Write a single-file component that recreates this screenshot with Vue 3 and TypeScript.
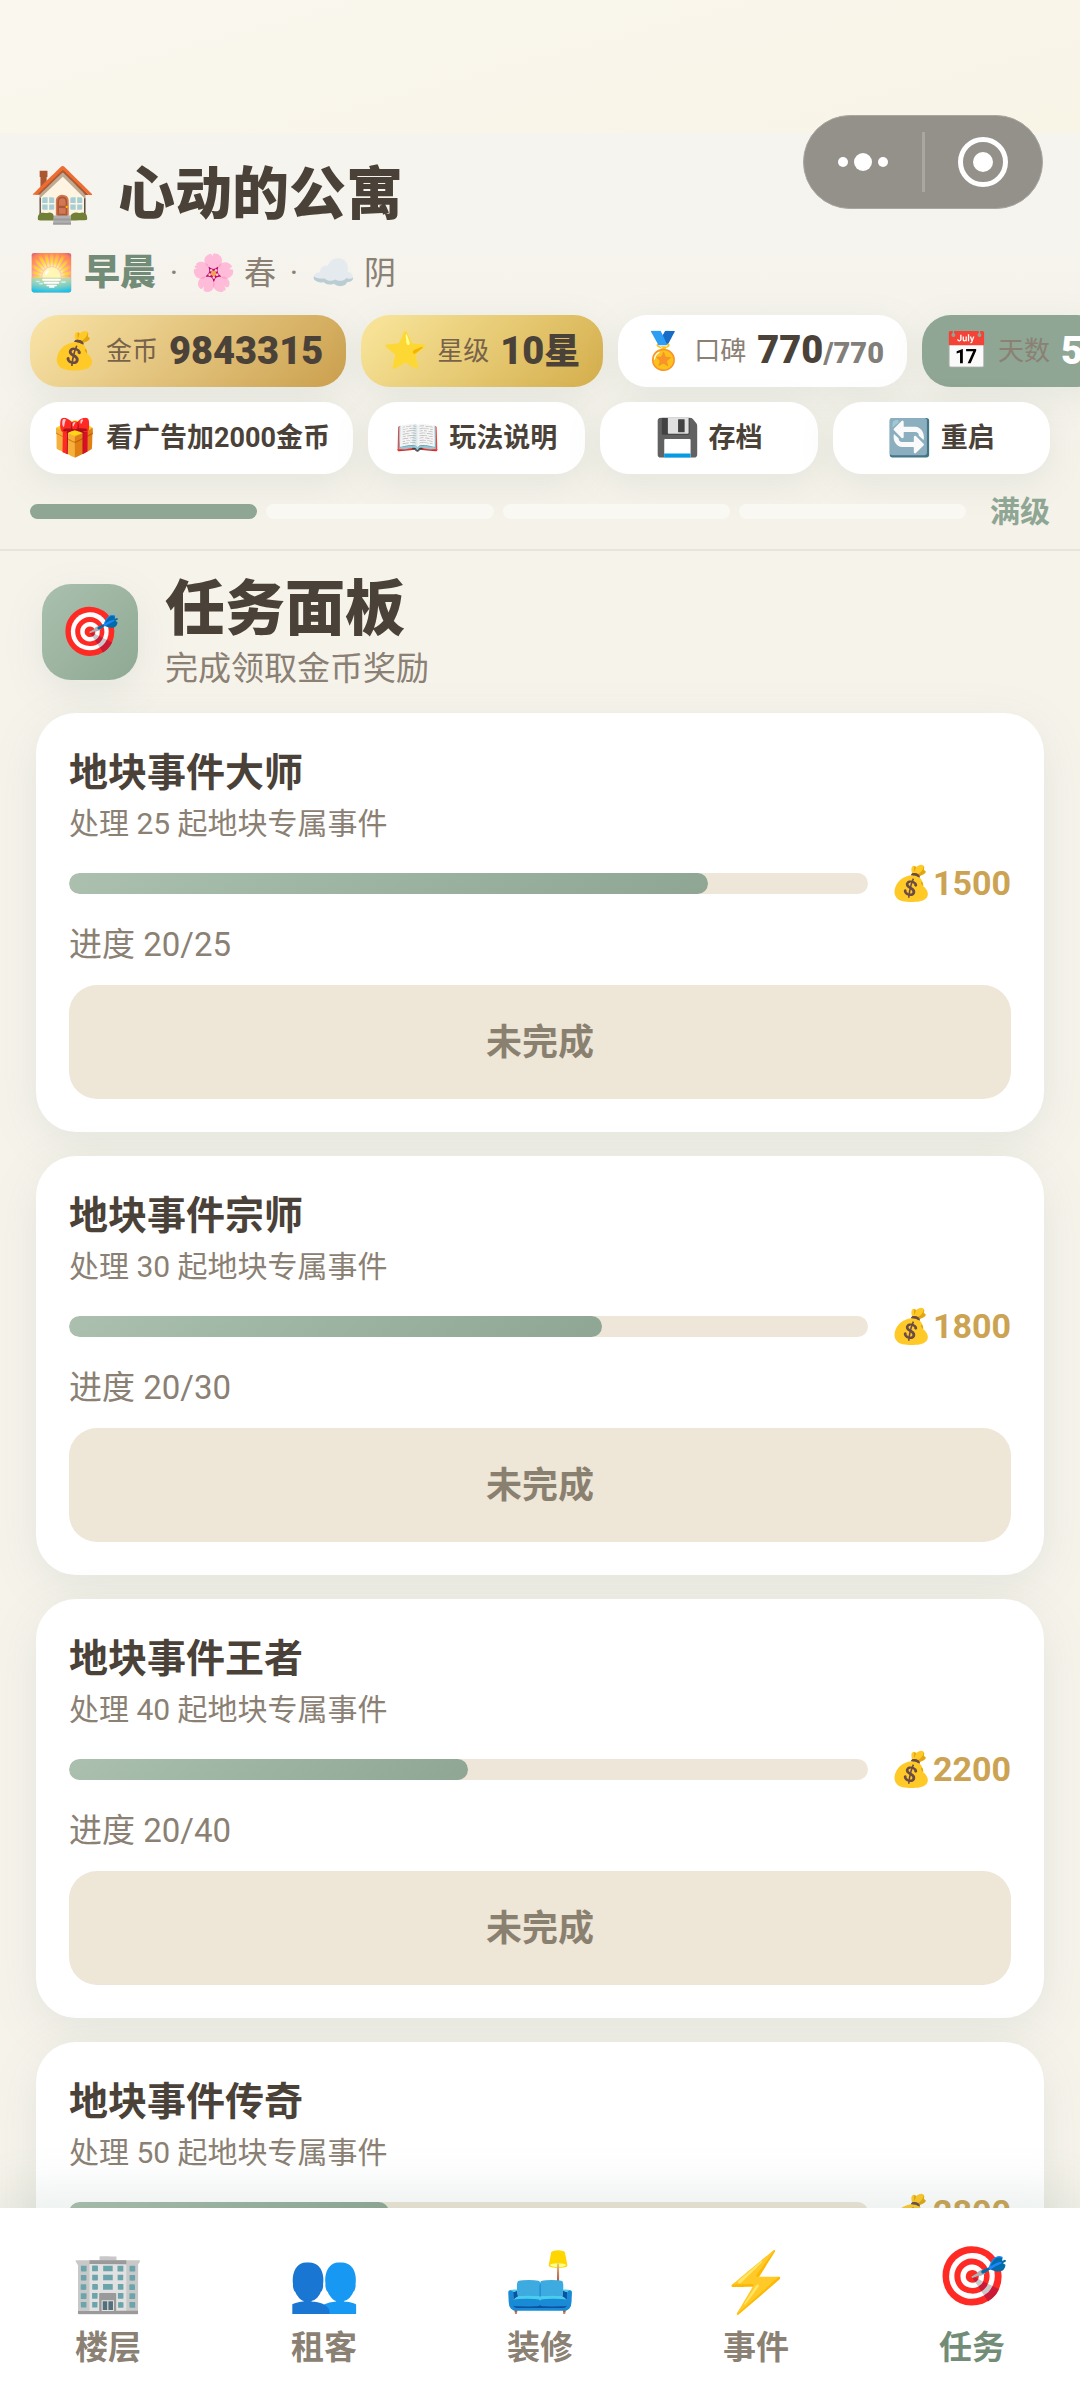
<script setup lang="ts">
interface Quest {
  title: string
  target: number
  done: number
  reward: number
}

interface Tab {
  icon: string
  label: string
  active?: boolean
}

const quests: Quest[] = [
  { title: '地块事件大师', target: 25, done: 20, reward: 1500 },
  { title: '地块事件宗师', target: 30, done: 20, reward: 1800 },
  { title: '地块事件王者', target: 40, done: 20, reward: 2200 },
  { title: '地块事件传奇', target: 50, done: 20, reward: 2800 },
]

const actions = [
  { icon: '🎁', label: '看广告加2000金币' },
  { icon: '📖', label: '玩法说明' },
  { icon: '💾', label: '存档' },
  { icon: '🔄', label: '重启' },
]

const tabs: Tab[] = [
  { icon: '🏢', label: '楼层' },
  { icon: '👥', label: '租客' },
  { icon: '🛋️', label: '装修' },
  { icon: '⚡', label: '事件' },
  { icon: '🎯', label: '任务', active: true },
]
</script>

<template>
  <div class="app">
    <div class="capsule">
      <button class="capsule-btn" type="button" aria-label="更多">
        <svg width="50" height="24" viewBox="0 0 50 24" fill="#fff">
          <circle cx="5" cy="12" r="5" /><circle cx="25" cy="12" r="9" /><circle cx="45" cy="12" r="5" />
        </svg>
      </button>
      <span class="capsule-line"></span>
      <button class="capsule-btn" type="button" aria-label="关闭">
        <svg width="50" height="50" viewBox="0 0 50 50" fill="none">
          <circle cx="25" cy="25" r="22.5" stroke="#fff" stroke-width="5" /><circle cx="25" cy="25" r="10" fill="#fff" />
        </svg>
      </button>
    </div>

    <header class="top">
      <h1 class="brand"><span class="emoji brand-icon">🏠</span>心动的公寓</h1>
      <div class="weather">
        <span class="emoji weather-icon">🌅</span><b>早晨</b><i>·</i>
        <span class="emoji weather-icon">🌸</span><span>春</span><i>·</i>
        <span class="emoji weather-icon">☁️</span><span>阴</span>
      </div>

      <div class="stats">
        <div class="chip gold"><span class="emoji chip-icon">💰</span><span class="chip-label">金币</span><strong>9843315</strong></div>
        <div class="chip star"><span class="emoji chip-icon">⭐</span><span class="chip-label">星级</span><strong>10<span class="unit">星</span></strong></div>
        <div class="chip"><span class="emoji chip-icon">🏅</span><span class="chip-label">口碑</span><strong>770<small>/770</small></strong></div>
        <div class="chip green"><span class="emoji chip-icon">📅</span><span class="chip-label">天数</span><strong>5</strong></div>
      </div>

      <div class="actions">
        <button v-for="a in actions" :key="a.label" class="action" type="button">
          <span class="emoji chip-icon">{{ a.icon }}</span>{{ a.label }}
        </button>
      </div>

      <div class="level">
        <span v-for="n in 4" :key="n" class="seg" :class="{ on: n === 1 }"></span>
        <span class="level-text">满级</span>
      </div>
    </header>

    <main class="content">
      <section class="panel-head">
        <div class="panel-icon"><span class="emoji">🎯</span></div>
        <div class="panel-text">
          <h2>任务面板</h2>
          <p>完成领取金币奖励</p>
        </div>
      </section>

      <article v-for="q in quests" :key="q.title" class="card">
        <h3>{{ q.title }}</h3>
        <p class="desc">处理 {{ q.target }} 起地块专属事件</p>
        <div class="row">
          <div class="track"><div class="fill" :style="{ width: (q.done / q.target) * 100 + '%' }"></div></div>
          <div class="reward"><span class="emoji reward-icon">💰</span>{{ q.reward }}</div>
        </div>
        <p class="progress">进度 {{ q.done }}/{{ q.target }}</p>
        <button class="claim" type="button" disabled>未完成</button>
      </article>
    </main>

    <nav class="tabbar">
      <a v-for="t in tabs" :key="t.label" href="#" class="tab" :class="{ active: t.active }">
        <span class="emoji tab-icon">{{ t.icon }}</span>
        <span>{{ t.label }}</span>
      </a>
    </nav>
  </div>
</template>

<style>
body {
  margin: 0;
  background: #f6f3eb;
}
</style>

<style scoped>
* {
  box-sizing: border-box;
}

.app {
  position: relative;
  display: flex;
  flex-direction: column;
  height: 100vh;
  padding-top: 133px;
  overflow: hidden;
  background: linear-gradient(165deg, #faf7ef 0, #f8f4e6 100%) top / 100% 133px no-repeat, #f6f3eb;
  color: #4a4238;
  font-family: Roboto, "Noto Sans CJK SC", sans-serif;
}

h1, h2, h3, p {
  margin: 0;
}

button {
  margin: 0;
  border: 0;
  font-family: inherit;
  color: inherit;
}

.emoji {
  display: inline-flex;
  flex: none;
  align-items: center;
  justify-content: center;
  font-family: "Noto Color Emoji", sans-serif;
  font-weight: 400;
  line-height: 1;
}

.capsule {
  position: absolute;
  top: 115px;
  right: 37px;
  z-index: 2;
  display: flex;
  align-items: center;
  width: 240px;
  height: 94px;
  border: 1px solid #aaa7a1;
  border-radius: 47px;
  background: #94908a;
}

.capsule-btn {
  display: flex;
  flex: 1;
  align-items: center;
  justify-content: center;
  padding: 0;
  background: none;
}

.capsule-line {
  width: 3px;
  height: 60px;
  background: #aaa7a2;
}

.top {
  flex: none;
  padding: 30px 30px 15px;
  border-bottom: 2px solid #e7e4dd;
  background: linear-gradient(#f6f4ef, #f5f2e9);
}

.brand {
  display: flex;
  align-items: center;
  gap: 22px;
  height: 64px;
  font-size: 57px;
  font-weight: 900;
  line-height: 64px;
}

.brand-icon {
  width: 66px;
  font-size: 54px;
}

.weather {
  display: flex;
  align-items: center;
  height: 48px;
  margin: 22px 0 18px;
  color: #8a8073;
  font-size: 32px;
  line-height: 48px;
}

.weather b {
  margin-left: 10px;
  color: #738c78;
  font-size: 36px;
  font-weight: 900;
}

.weather i {
  width: 36px;
  text-align: center;
  font-style: normal;
}

.weather span + span {
  margin-left: 8px;
}

.weather-icon {
  width: 44px;
  font-size: 36px;
}

.stats {
  display: flex;
  gap: 15px;
  line-height: 44px;
}

.chip {
  display: flex;
  flex: none;
  align-items: center;
  height: 72px;
  padding: 0 23px;
  border-radius: 29px;
  background: #fff;
  box-shadow: 0 9px 36px rgba(107, 142, 122, 0.12);
  white-space: nowrap;
}

.chip.gold {
  background: linear-gradient(135deg, #f9e4a8, #cba04e);
}

.chip.star {
  background: linear-gradient(135deg, #f9e69c, #d4ae4c);
}

.chip.green {
  background: #8ea693;
}

.chip-icon {
  width: 44px;
  font-size: 36px;
}

.chip-label {
  margin: 0 11px 0 9px;
  color: #8a8073;
  font-size: 26px;
}

.gold .chip-label,
.star .chip-label {
  color: #77634a;
}

.chip strong {
  font-size: 38px;
  font-weight: 900;
}

.chip .unit {
  font-size: 36px;
}

.chip small {
  color: #827f7b;
  font-size: 29px;
}

.chip.green strong {
  color: #fff;
}

.actions {
  display: flex;
  gap: 15px;
  margin-top: 15px;
}

.action {
  display: flex;
  flex: 1 1 0;
  align-items: center;
  justify-content: center;
  gap: 9px;
  height: 72px;
  padding: 0 23px;
  border-radius: 29px;
  background: #fff;
  box-shadow: 0 9px 36px rgba(107, 142, 122, 0.12);
  font-size: 27px;
  font-weight: 700;
  line-height: 44px;
  white-space: nowrap;
}

.level {
  display: flex;
  align-items: center;
  gap: 9px;
  height: 45px;
  margin-top: 15px;
}

.seg {
  flex: 1;
  height: 15px;
  border-radius: 8px;
  background: #f9f8f3;
}

.seg.on {
  background: #8ea693;
}

.level-text {
  margin-left: 15px;
  color: #8ea693;
  font-size: 30px;
  font-weight: 700;
  line-height: 44px;
}

.content {
  display: flex;
  flex: 1;
  flex-direction: column;
  gap: 24px;
  min-height: 0;
  padding: 24px 36px;
  overflow-y: auto;
  scrollbar-width: none;
}

.panel-head {
  display: flex;
  flex: none;
  align-items: center;
  gap: 27px;
  height: 114px;
  padding: 0 6px;
}

.panel-icon {
  display: flex;
  align-items: center;
  justify-content: center;
  width: 96px;
  height: 96px;
  border-radius: 29px;
  background: linear-gradient(135deg, #abc0af, #8ea993);
  box-shadow: 0 12px 40px rgba(107, 142, 122, 0.12);
  font-size: 48px;
}

.panel-text {
  padding-top: 8px;
}

.panel-head h2 {
  font-size: 60px;
  font-weight: 900;
  line-height: 66px;
}

.panel-head p {
  color: #8a8073;
  font-size: 33px;
  line-height: 52px;
}

.card {
  flex: none;
  padding: 34px 33px 33px;
  border-radius: 40px;
  background: #fff;
  box-shadow: 0 12px 48px rgba(107, 142, 122, 0.12);
}

.card h3 {
  font-size: 39px;
  font-weight: 700;
  line-height: 52px;
}

.desc {
  color: #8a8073;
  font-size: 30px;
  line-height: 50px;
}

.row {
  display: flex;
  align-items: center;
  gap: 22px;
  height: 48px;
  margin: 10px 0 16px;
}

.track {
  flex: 1;
  height: 21px;
  border-radius: 11px;
  background: #eee6d8;
  overflow: hidden;
}

.fill {
  height: 100%;
  border-radius: 11px;
  background: linear-gradient(135deg, #abc0af, #8ea693);
}

.reward {
  display: flex;
  align-items: center;
  color: #cba353;
  font-size: 34px;
  font-weight: 700;
  line-height: 48px;
}

.reward-icon {
  width: 43px;
  font-size: 34px;
}

.progress {
  color: #8a8073;
  font-size: 33px;
  line-height: 44px;
}

.claim {
  display: block;
  width: 100%;
  height: 114px;
  margin-top: 18px;
  padding: 2px 0 0;
  border-radius: 28px;
  background: #eee6d7;
  color: #8a8070;
  font-size: 36px;
  font-weight: 700;
  line-height: 44px;
}

.tabbar {
  position: relative;
  display: flex;
  flex: none;
  height: 192px;
  background: #fff;
  box-shadow: 0 -12px 48px rgba(107, 142, 122, 0.16);
}

.tab {
  display: flex;
  flex: 1;
  flex-direction: column;
  align-items: center;
  gap: 10px;
  padding-top: 40px;
  color: #8a8073;
  font-size: 33px;
  font-weight: 700;
  line-height: 44px;
  text-decoration: none;
}

.tab-icon {
  height: 68px;
  font-size: 58px;
}

.tab.active {
  color: #738c78;
}

.tab.active .tab-icon {
  transform: translateY(-6px);
}
</style>
